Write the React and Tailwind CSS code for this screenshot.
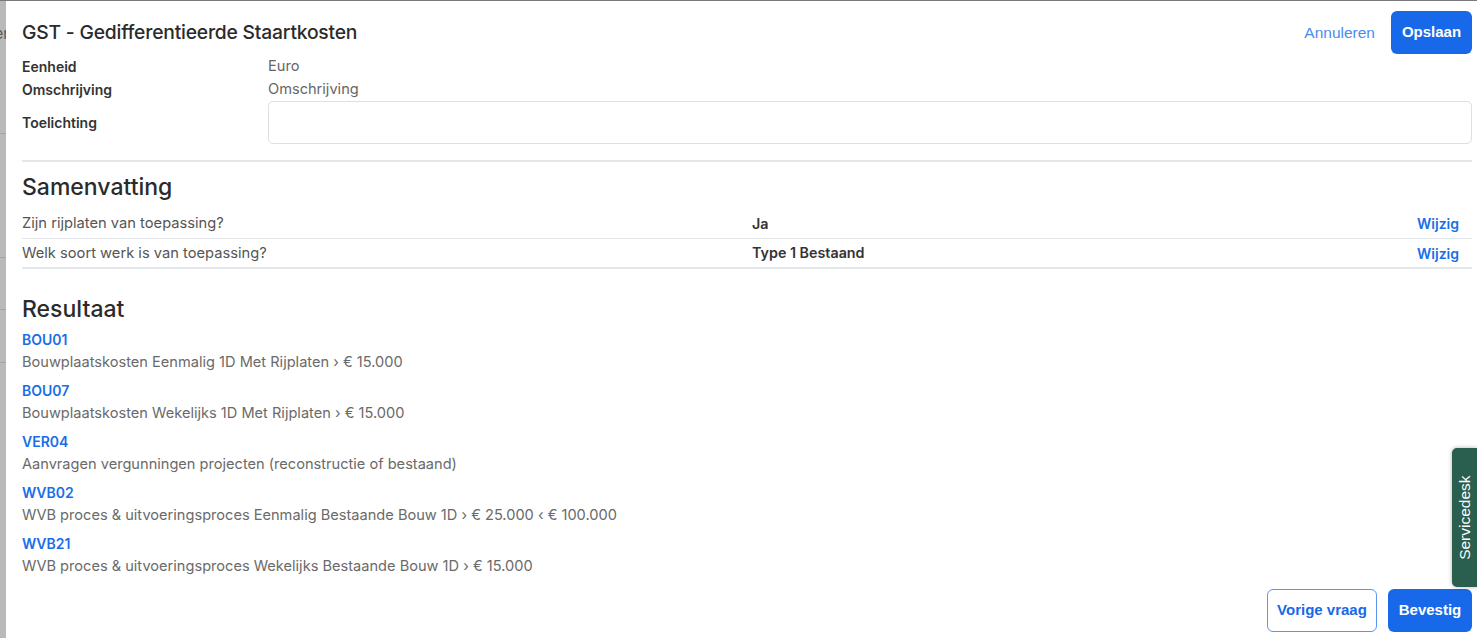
import React from 'react'

const META = [
  { label: 'Eenheid', value: 'Euro' },
  { label: 'Omschrijving', value: 'Omschrijving' },
]

const SUMMARY = [
  { q: 'Zijn rijplaten van toepassing?', a: 'Ja', h: 'h-[30px] border-b border-[#e3e6ea]' },
  { q: 'Welk soort werk is van toepassing?', a: 'Type 1 Bestaand', h: 'h-[30px] border-b-2 border-[#e3e6ea]' },
]

const RESULTS = [
  { code: 'BOU01', text: 'Bouwplaatskosten Eenmalig 1D Met Rijplaten › € 15.000' },
  { code: 'BOU07', text: 'Bouwplaatskosten Wekelijks 1D Met Rijplaten › € 15.000' },
  { code: 'VER04', text: 'Aanvragen vergunningen projecten (reconstructie of bestaand)' },
  { code: 'WVB02', text: 'WVB proces & uitvoeringsproces Eenmalig Bestaande Bouw 1D › € 25.000 ‹ € 100.000' },
  { code: 'WVB21', text: 'WVB proces & uitvoeringsproces Wekelijks Bestaande Bouw 1D › € 15.000' },
]

export default function App() {
  return (
    <div className="relative flex h-[638px] w-full overflow-hidden border-t border-[#7a7a7a] bg-white font-['Inter',sans-serif] text-[#2e2e2e]">
      {/* background page peeking out behind the modal */}
      <div className="relative w-[6px] shrink-0 overflow-hidden bg-[#b9b9b9]">
        <span className="absolute right-[-3px] top-[22px] text-[15px] text-[#555]">er</span>
        <div className="absolute left-0 right-0 top-[132px] h-px bg-[#a5a5a5]" />
        <div className="absolute left-0 right-0 top-[256px] h-px bg-[#a5a5a5]" />
        <div className="absolute left-0 right-0 top-[308px] h-px bg-[#a5a5a5]" />
        <div className="absolute left-0 right-0 top-[361px] h-px bg-[#a5a5a5]" />
      </div>

      <div className="flex min-w-0 flex-1 flex-col pl-[16px] pr-[5px] pt-[10px]">
        <div className="flex h-[43px] items-center">
          <h1 className="text-[19.3px] font-medium tracking-[-0.2px] text-[#2b2b2b]">GST - Gedifferentieerde Staartkosten</h1>
          <div className="ml-auto flex items-center gap-[16px]">
            <button className="font-['Liberation_Sans',sans-serif] text-[15.5px] text-[#4a8cf0]">Annuleren</button>
            <button className="h-[43px] w-[81px] rounded-[6px] bg-[#1769e9] font-['Liberation_Sans',sans-serif] text-[15px] font-bold text-white">Opslaan</button>
          </div>
        </div>

        <div className="mt-[1px] grid grid-cols-[246px_1fr] text-[14px]">
          {META.map((m) => (
            <React.Fragment key={m.label}>
              <div className="flex h-[23px] items-center font-semibold text-[#333]">{m.label}</div>
              <div className="flex h-[23px] items-center text-[14.6px] text-[#666]">{m.value}</div>
            </React.Fragment>
          ))}
          <div className="flex items-center font-semibold text-[#333]">Toelichting</div>
          <div className="h-[43px] rounded-[5px] border border-[#dcdfe4]" />
        </div>

        <div className="mt-[16px] h-[2px] bg-[#e3e6ea]" />

        <h2 className="mt-[12px] text-[23px] font-medium leading-[26px] text-[#2b2b2b]">Samenvatting</h2>
        <div className="mt-[9px] text-[14.7px]">
          {SUMMARY.map((s) => (
            <div key={s.q} className={`flex items-center ${s.h}`}>
              <span className="w-[730px] text-[#555]">{s.q}</span>
              <span className="text-[14.3px] font-semibold text-[#333]">{s.a}</span>
              <a className="ml-auto mr-[13px] text-[14px] font-semibold text-[#1a6ee8]">Wijzig</a>
            </div>
          ))}
        </div>

        <h2 className="mt-[27px] text-[23px] font-medium leading-[26px] text-[#2b2b2b]">Resultaat</h2>
        <div className="mt-[6px] flex flex-col gap-[5px]">
          {RESULTS.map((r) => (
            <div key={r.code}>
              <div className="text-[14px] font-semibold leading-[23px] text-[#1a6ee8]">{r.code}</div>
              <div className="text-[14.6px] leading-[23px] text-[#6a6a6a]">{r.text}</div>
            </div>
          ))}
        </div>

        <div className="mt-auto flex justify-end gap-[11px] pb-[6px]">
          <button className="h-[43px] w-[110px] rounded-[6px] border border-[#5a96f0] font-['Liberation_Sans',sans-serif] text-[15px] font-bold text-[#1769e9]">Vorige vraag</button>
          <button className="h-[43px] w-[84px] rounded-[6px] bg-[#1769e9] font-['Liberation_Sans',sans-serif] text-[15px] font-bold text-white">Bevestig</button>
        </div>
      </div>

      <div className="absolute right-0 top-[447px] flex h-[139px] w-[25px] items-center justify-center rounded-l-[5px] bg-[#2a5e4f] shadow-[0_0_4px_rgba(0,0,0,0.3)]">
        <span className="-rotate-90 whitespace-nowrap font-['Liberation_Sans',sans-serif] text-[15.5px] text-white">Servicedesk</span>
      </div>
    </div>
  )
}
